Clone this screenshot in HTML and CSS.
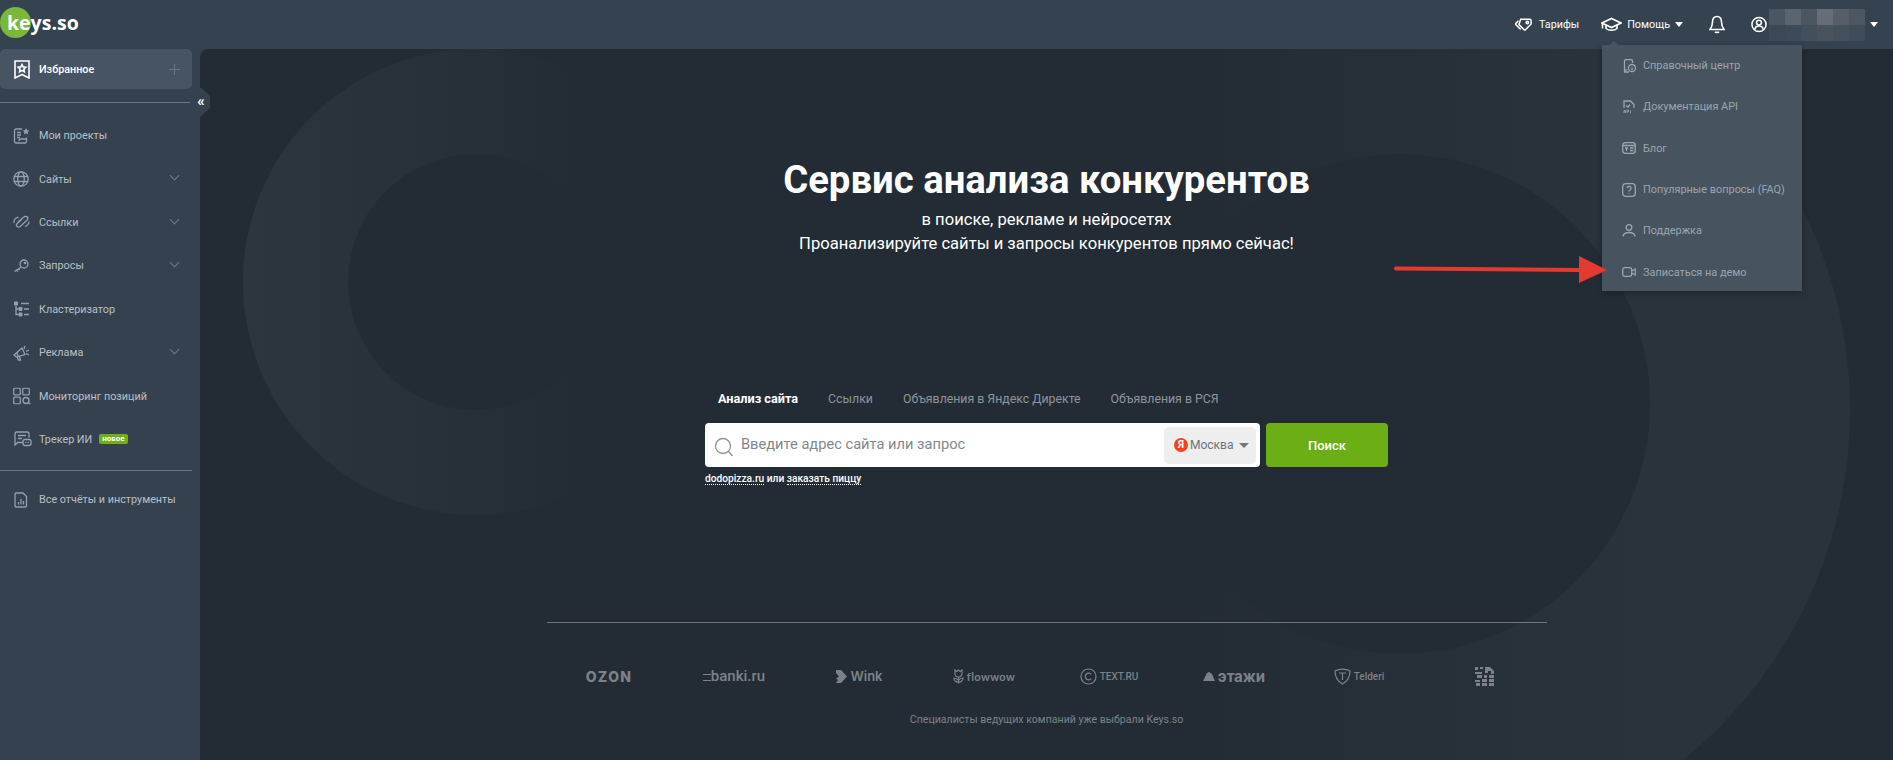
FILE: index.html
```html
<!DOCTYPE html>
<html lang="ru">
<head>
    <meta charset="UTF-8">
    <title>Keys.so</title>
    <link rel="stylesheet" href="styles.css">
</head>
<body>
<div class="app">
    <header class="topbar">
        <a class="logo"><span class="logo-dot"></span><span class="logo-text">keys.so</span></a>
        <nav class="topnav">
            <a class="topnav-item tariffs">
                <svg class="ico ico-bold" width="18" height="15" viewBox="0 0 19 15"><path d="M6 2h9.500a1.500 1.500 0 0 1 1.500 1.500V7l-6 6a1 1 0 0 1-1.400 0L4.500 7.900a1 1 0 0 1 0-1.400z"/><path d="M3.500 3.500L1 6.300a1 1 0 0 0 0 1.400l5 5"/><circle cx="13" cy="5.500" r="1.300"/></svg>
                Тарифы
            </a>
            <a class="topnav-item help">
                <svg class="ico ico-bold" width="21" height="15" viewBox="0 0 21 15"><path d="M10.500 1.500L20 6l-9.500 4.500L1 6z"/><path d="M5 8v3.500c2.500 2.300 8.500 2.300 11 0V8"/><path d="M1.500 6.500v5"/></svg>
                Помощь <span class="caret"></span>
            </a>
            <a class="topnav-item bell">
                <svg class="ico ico-bold" width="16" height="19" viewBox="0 0 16 19"><path d="M8 1.500c-3 0-4.500 2.300-4.500 5.500 0 3.500-1 5.500-2.500 7.500h14c-1.500-2-2.500-4-2.500-7.500 0-3.200-1.500-5.500-4.500-5.500z"/><path d="M6 16.800c.8 1 3.200 1 4 0"/></svg>
            </a>
            <a class="topnav-item account">
                <svg class="ico ico-bold" width="16" height="17" viewBox="0 0 17 17"><circle cx="8.500" cy="8.500" r="7.500"/><circle cx="8.500" cy="6.500" r="2.600"/><path d="M4 14c.3-2.800 2-4 4.500-4s4.200 1.200 4.500 4"/></svg>
                <span class="blur-name">
                    <i></i><i></i><i></i><i></i><i></i><i></i>
                    <i></i><i></i><i></i><i></i><i></i><i></i>
                </span>
                <span class="caret"></span>
            </a>
        </nav>
    </header>

    <aside class="sidebar">
        <a class="fav">
            <svg class="ico ico-bold" width="16" height="19" viewBox="0 0 16 19"><path d="M1 1h14v17l-7-3.500L1 18z"/><path d="M8 4.500l1.200 2.400 2.600.4-1.900 1.800.5 2.600L8 10.500l-2.400 1.200.5-2.600-1.900-1.800 2.600-.4z"/></svg>
            <span class="fav-label">Избранное</span>
            <span class="fav-plus"></span>
        </a>
        <hr class="side-line side-line-top">
        <ul class="side-menu">
            <li class="side-item">
                <svg class="ico" width="17" height="17" viewBox="0 0 17 17"><path d="M9 1.500H3a1.500 1.500 0 0 0-1.500 1.500v11A1.500 1.500 0 0 0 3 15.500h9a1.500 1.500 0 0 0 1.500-1.500V10"/><path d="M4 5h4M4 7.500h4M4 10h3M6 13.500c0-1.500 1-2 2-2h5"/><path class="solid" d="M13 .5l1 2.300 2.500.2-1.900 1.600.6 2.400-2.200-1.300-2.200 1.300.6-2.400L9.500 3l2.500-.2z"/></svg>
                <span>Мои проекты</span>
            </li>
            <li class="side-item">
                <svg class="ico" width="16" height="16" viewBox="0 0 16 16"><circle cx="8" cy="8" r="7.200"/><ellipse cx="8" cy="8" rx="3.300" ry="7.200"/><path d="M1.200 5.500h13.600M1.200 10.500h13.600"/></svg>
                <span>Сайты</span><span class="chevron"></span>
            </li>
            <li class="side-item">
                <svg class="ico" width="17" height="13" viewBox="0 0 17 13"><path d="M9 3.500L4 8.300c-1 1-.6 2.200.2 2.800.8.600 2 .8 3-.2l6.600-6.100c1.500-1.400 1.300-2.800.4-3.500-1-.7-2.400-.7-3.600.4L5 6.500"/><path d="M5.500 2H4.200C2 2.800.7 5 1 7.500M12 11c2-.6 3.800-2.600 4-5"/></svg>
                <span>Ссылки</span><span class="chevron"></span>
            </li>
            <li class="side-item">
                <svg class="ico" width="16" height="14" viewBox="0 0 16 14"><circle cx="11" cy="5" r="4"/><circle cx="12" cy="4" r=".7"/><path d="M8 8L1.500 12.500M3.500 11.200l1.500 1.300M5.500 9.800l1.300 1.200"/></svg>
                <span>Запросы</span><span class="chevron"></span>
            </li>
            <li class="side-item">
                <svg class="ico" width="17" height="17" viewBox="0 0 17 17"><rect class="solid" x="1" y="1" width="4" height="4" rx="1"/><rect class="solid" x="5.500" y="6.500" width="4" height="4" rx="1"/><rect class="solid" x="5.500" y="12" width="4" height="4" rx="1"/><path d="M3 5v9h2.500M3 8.500h2.500M8 3h8M11 8.500h5M11 14h5"/></svg>
                <span>Кластеризатор</span>
            </li>
            <li class="side-item">
                <svg class="ico" width="17" height="16" viewBox="0 0 17 16"><path d="M1 10l8-7 3 6.500-8.500 2.500z"/><path d="M4 12l1.500 3h2L6.500 11.300M3.500 7l2 5M12 1l-1 3M16 5l-3 1.500M16 10l-3-1.500"/></svg>
                <span>Реклама</span><span class="chevron"></span>
            </li>
            <li class="side-item">
                <svg class="ico" width="18" height="17" viewBox="0 0 18 17"><rect x=".7" y=".7" width="6.600" height="6.600" rx="1"/><rect x="9.700" y=".7" width="6.600" height="6.600" rx="1"/><rect x=".7" y="9.700" width="6.600" height="6.600" rx="1"/><circle cx="13" cy="13" r="3"/><path d="M15.200 15.200l2.300 1.600"/></svg>
                <span>Мониторинг позиций</span>
            </li>
            <li class="side-item">
                <svg class="ico" width="19" height="16" viewBox="0 0 19 16"><path d="M10 11.500H4.500L2 14V3a2 2 0 0 1 2-2h10a2 2 0 0 1 2 2v3.500"/><path d="M5 4.500h8M5 7.500h4"/><rect x="10" y="8.500" width="8" height="6" rx="2"/><path d="M12.800 11v1M15.200 11v1"/></svg>
                <span>Трекер ИИ</span><span class="new-badge">новое</span>
            </li>
        </ul>
        <hr class="side-line side-line-bottom">
        <div class="side-item">
            <svg class="ico" width="16" height="16" viewBox="0 0 16 16"><path d="M3 1h7l3.500 3.500V14a1 1 0 0 1-1 1H3a1 1 0 0 1-1-1V2a1 1 0 0 1 1-1z"/><path d="M5.500 12.500v-2.500M8 12.500V7M10.500 12.500V9"/></svg>
            <span>Все отчёты и инструменты</span>
        </div>
        <button class="collapse">«</button>
    </aside>

    <main class="main">
        <svg class="bg-rings" width="1693" height="711" viewBox="200 49 1693 711">
            <defs>
                <linearGradient id="ringLeft" gradientUnits="userSpaceOnUse" x1="243" y1="0" x2="590" y2="0">
                    <stop offset="0" stop-color="#2d353e"/>
                    <stop offset="1" stop-color="#232c35"/>
                </linearGradient>
                <linearGradient id="ringRight" gradientUnits="userSpaceOnUse" x1="1180" y1="0" x2="1640" y2="0">
                    <stop offset="0" stop-color="#232c35"/>
                    <stop offset="1" stop-color="#29333c"/>
                </linearGradient>
            </defs>
            <path fill="url(#ringLeft)" fill-rule="evenodd" d="M243 282a233 233 0 1 0 466 0a233 233 0 1 0-466 0zM348 282a128 128 0 1 0 256 0a128 128 0 1 0-256 0z"/>
            <path fill="url(#ringRight)" fill-rule="evenodd" d="M950 410a450 450 0 1 0 900 0a450 450 0 1 0-900 0zM1150 404a250 250 0 1 0 500 0a250 250 0 1 0-500 0z"/>
        </svg>

        <div class="hero">
            <h1>Сервис анализа конкурентов</h1>
            <p>в поиске, рекламе и нейросетях</p>
            <p>Проанализируйте сайты и запросы конкурентов прямо сейчас!</p>
        </div>

        <div class="search-block">
            <div class="tabs">
                <a class="tab active">Анализ сайта</a>
                <a class="tab">Ссылки</a>
                <a class="tab">Объявления в Яндекс Директе</a>
                <a class="tab">Объявления в РСЯ</a>
            </div>
            <div class="search-row">
                <div class="search-box">
                    <svg class="search-ico" width="20" height="20" viewBox="0 0 20 20"><circle cx="9" cy="9" r="7.500"/><path d="M14.500 14.500l4 4.500"/></svg>
                    <span class="placeholder">Введите адрес сайта или запрос</span>
                    <div class="region">
                        <span class="ya">Я</span>
                        <span>Москва</span>
                        <span class="caret caret-grey"></span>
                    </div>
                </div>
                <button class="search-btn">Поиск</button>
            </div>
            <div class="hints"><a>dodopizza.ru</a> или <a>заказать пиццу</a></div>
        </div>

        <div class="clients">
            <div class="client-row">
                <span class="client ozon">OZON</span>
                <span class="client banki"><i class="banki-lines"></i>banki.ru</span>
                <span class="client wink">
                    <svg width="12" height="13" viewBox="0 0 12 13"><path class="logo-fill" d="M1 0h5l6 6.500L6 13H1l2-3-2-1.500L4 6.500 1 3z"/></svg>
                    Wink
                </span>
                <span class="client flowwow">
                    <svg width="11" height="15" viewBox="0 0 11 15"><path class="logo-line" d="M2 1l1.800 1.500L5.500 1l1.700 1.500L9 1v3.500a3.500 3.500 0 0 1-7 0zM5.500 8v6.500M1 9c0 3 2 4 4.500 4.500C8 13 10 12 10 9c-2 0-3.500 1-4.500 2.500C4.500 10 3 9 1 9z"/></svg>
                    flowwow
                </span>
                <span class="client textru">
                    <svg width="17" height="17" viewBox="0 0 17 17"><circle class="logo-line" cx="8.500" cy="8.500" r="7.500"/><path class="logo-line" d="M11.300 6.300a3.400 3.400 0 1 0 0 4.400"/></svg>
                    TEXT.RU
                </span>
                <span class="client etazhi">
                    <svg width="12" height="9" viewBox="0 0 12 9"><path class="logo-fill" d="M0 9l4-8 2-1 3 2 3 7z"/></svg>
                    этажи
                </span>
                <span class="client telderi">
                    <svg width="17" height="17" viewBox="0 0 17 17"><path class="logo-line" d="M1 3c4-2.500 11-2.500 15 0 0 6-2 10-7.500 13C3 13 1 9 1 3z"/><path class="logo-line" d="M5 5h7M8.500 5v7"/></svg>
                    Telderi
                </span>
                <span class="client zoo">
                    <svg width="19" height="19" viewBox="0 0 19 19"><path class="logo-fill" d="M0 0h3v3H0zM5 0h3v2H5zM10 0h5l4 4v3h-3V4h-3v2h-3zM0 5h7v2H0zM2 8h5v3H2zM9 8h3v3H9zM14 8h5v3h-5zM0 13h5v2H0zM7 12h5v3H7zM14 12h5v3h-5zM1 16h4v3H1zM7 16h5v3H7zM14 16h5v3h-5z"/></svg>
                </span>
            </div>
            <p class="client-note">Специалисты ведущих компаний уже выбрали Keys.so</p>
        </div>
    </main>

    <div class="help-menu">
        <a class="help-item">
            <span class="help-ico"><svg class="ico" width="13" height="14" viewBox="0 0 13 14"><path d="M6 13H1.500V2A1.500 1.500 0 0 1 3 .5h5A1.500 1.500 0 0 1 9.500 2v2"/><path d="M1.500 11h3"/><circle cx="9" cy="9" r="3.500"/><path d="M9 8.500V11M9 7v.2"/></svg></span>
            Справочный центр
        </a>
        <a class="help-item">
            <span class="help-ico"><svg class="ico" width="12" height="14" viewBox="0 0 12 14"><path d="M1 8V1h6.500L11 4.500V8"/><path d="M3 5.500l2 1.500 2-2.500"/><path class="thin" d="M1 13V10.500h1.500V13M1 11.800h1.500M4 13V10h1.500v1.800H4M7.500 10v3"/></svg></span>
            Документация API
        </a>
        <a class="help-item">
            <span class="help-ico"><svg class="ico" width="14" height="12" viewBox="0 0 14 12"><rect x=".7" y=".7" width="12.600" height="10.600" rx="2.500"/><path d="M.7 3.500h12.600M3 6h3M4.500 6v3M8 6h3.500M8 8.500h3.500"/></svg></span>
            Блог
        </a>
        <a class="help-item">
            <span class="help-ico"><svg class="ico" width="14" height="14" viewBox="0 0 14 14"><rect x=".7" y=".7" width="12.600" height="12.600" rx="3"/><path d="M5 5.300a2 2 0 1 1 3 1.700c-.7.400-1 .8-1 1.500M7 10v.7"/></svg></span>
            Популярные вопросы (FAQ)
        </a>
        <a class="help-item">
            <span class="help-ico"><svg class="ico" width="14" height="13" viewBox="0 0 14 13"><circle cx="7" cy="3.500" r="2.800"/><path d="M1 12.500c.3-2.800 2.700-4 6-4s5.700 1.200 6 4"/></svg></span>
            Поддержка
        </a>
        <a class="help-item">
            <span class="help-ico"><svg class="ico" width="14" height="10" viewBox="0 0 14 10"><rect x=".7" y=".7" width="9" height="8.600" rx="2"/><path d="M9.700 4l3.600-2v6L9.700 6"/></svg></span>
            Записаться на демо
        </a>
    </div>

    <svg class="red-arrow" width="214" height="30" viewBox="0 0 214 30">
        <path d="M2 13.500L186 15" stroke="#e53a2f" stroke-width="4" stroke-linecap="round"/>
        <path d="M185 1l28 14-28 13z" fill="#e53a2f"/>
    </svg>
</div>
</body>
</html>
```

FILE: styles.css
```css
* {
    box-sizing: border-box;
}
html, body {
    margin: 0;
    height: 100%;
    overflow: hidden;
}
body {
    font-family: Roboto, "Liberation Sans", sans-serif;
    font-size: 10.8px;
    background-color: #35414f;
    color: #fff;
}
a {
    color: inherit;
    text-decoration: none;
}
.app {
    position: relative;
    display: grid;
    grid-template-columns: 200px 1fr;
    grid-template-rows: 49px 1fr;
    height: 100vh;
}
.ico {
    flex: none;
    fill: none;
    stroke: currentColor;
    stroke-width: 1.3;
}
.ico-bold {
    stroke-width: 1.6;
}
.ico .solid {
    fill: currentColor;
    stroke: none;
}
.ico .thin {
    stroke-width: 0.8;
}
.caret {
    display: inline-block;
    width: 0;
    height: 0;
    border-left: 4px solid transparent;
    border-right: 4px solid transparent;
    border-top: 5px solid #fff;
}

/* top bar */
.topbar {
    grid-column: 1 / 3;
    display: flex;
    justify-content: space-between;
    align-items: center;
    background-color: #35424f;
}
.logo {
    position: relative;
    display: block;
    width: 90px;
    height: 49px;
}
.logo-dot {
    position: absolute;
    left: 0;
    top: 7px;
    width: 31px;
    height: 31px;
    border-radius: 50%;
    background-color: #79b83b;
}
.logo-text {
    position: absolute;
    left: 7px;
    top: 8px;
    font-family: "Open Sans", Roboto, sans-serif;
    font-size: 19.5px;
    font-weight: 700;
    line-height: 30px;
}
.topnav {
    display: flex;
    align-items: center;
    height: 49px;
    padding-right: 15px;
}
.topnav-item {
    display: flex;
    align-items: center;
}
.tariffs {
    gap: 6px;
    margin-right: 22px;
}
.help {
    gap: 5px;
    margin-right: 26px;
}
.bell {
    margin-right: 26px;
}
.account {
    gap: 2px;
}
.blur-name {
    display: grid;
    grid-template-columns: repeat(6, 16px);
    grid-auto-rows: 16px;
    margin-right: 3px;
}
.blur-name i:nth-child(1) { background-color: #4a5661; }
.blur-name i:nth-child(2) { background-color: #5b6570; }
.blur-name i:nth-child(3) { background-color: #4a5763; }
.blur-name i:nth-child(4) { background-color: #676d77; }
.blur-name i:nth-child(5) { background-color: #565f69; }
.blur-name i:nth-child(6) { background-color: #4d5761; }
.blur-name i:nth-child(7) { background-color: #3b4855; }
.blur-name i:nth-child(8) { background-color: #3d4a57; }
.blur-name i:nth-child(9) { background-color: #43505c; }
.blur-name i:nth-child(10) { background-color: #48535e; }
.blur-name i:nth-child(11) { background-color: #45505c; }
.blur-name i:nth-child(12) { background-color: #3f4c59; }

/* sidebar */
.sidebar {
    position: relative;
    z-index: 1;
    color: #b9c0c8;
}
.fav {
    display: flex;
    align-items: center;
    width: 192px;
    height: 40px;
    padding: 0 12px 0 14px;
    border-radius: 5px;
    background-color: #465464;
    color: #fff;
}
.fav-label {
    margin-left: 9px;
    flex: 1;
    font-weight: 500;
}
.fav-plus {
    position: relative;
    width: 11px;
    height: 11px;
    background:
        linear-gradient(#6a7685, #6a7685) center / 100% 1px no-repeat,
        linear-gradient(#6a7685, #6a7685) center / 1px 100% no-repeat;
}
.side-line {
    height: 1px;
    margin: 0;
    border: none;
    background-color: #6d7681;
}
.side-line-top {
    width: 190px;
    margin-top: 13px;
}
.side-line-bottom {
    width: 192px;
    margin: 9px 0 7px;
}
.side-menu {
    list-style: none;
    margin: 11px 0 0;
    padding: 0;
}
.side-item {
    position: relative;
    display: flex;
    align-items: center;
    height: 43.4px;
    padding-left: 39px;
}
.side-item .ico {
    position: absolute;
    left: 13px;
    top: 50%;
    transform: translateY(-50%);
    color: #95a0ac;
}
.chevron {
    position: absolute;
    left: 171px;
    top: 15px;
    width: 7px;
    height: 7px;
    border-right: 1px solid #6f7c8a;
    border-bottom: 1px solid #6f7c8a;
    transform: rotate(45deg);
}
.new-badge {
    margin-left: 7px;
    padding: 0 3px;
    height: 10px;
    border-radius: 2px;
    background-color: #6fb016;
    color: #fff;
    font-size: 8px;
    font-weight: 700;
    line-height: 10px;
}
.collapse {
    position: absolute;
    left: 190px;
    top: 38px;
    width: 20px;
    height: 30px;
    padding: 0 0 2px 2px;
    border: none;
    clip-path: polygon(50% 0, 100% 30%, 100% 70%, 50% 100%, 0 100%, 0 0);
    background-color: #35414f;
    color: #fff;
    font-family: Roboto, sans-serif;
    font-size: 15px;
    font-weight: 700;
    line-height: 26px;
}

/* main area */
.main {
    position: relative;
    overflow: hidden;
    display: flex;
    flex-direction: column;
    align-items: center;
    border-top-left-radius: 8px;
    background-color: #232c35;
}
.bg-rings {
    position: absolute;
    left: 0;
    top: 0;
}
.hero,
.search-block,
.clients {
    position: relative;
}
.hero {
    padding-top: 110px;
    text-align: center;
}
.hero h1 {
    margin: 0 0 7px;
    font-size: 38.3px;
    font-weight: 700;
    line-height: 42px;
}
.hero p {
    margin: 0;
    font-size: 16.6px;
    line-height: 24px;
}
.search-block {
    width: 683px;
    margin-top: 133px;
}
.tabs {
    display: flex;
    height: 20px;
    margin-bottom: 14px;
    padding-left: 13px;
    font-size: 12.3px;
    line-height: 20px;
}
.tab {
    padding-right: 30px;
    color: #8f959c;
}
.tab.active {
    color: #fff;
    font-size: 12.7px;
    font-weight: 700;
}
.search-row {
    display: flex;
    gap: 6px;
    height: 44px;
}
.search-box {
    display: flex;
    align-items: center;
    width: 555px;
    padding: 0 4px 0 9px;
    border-radius: 4px;
    background-color: #fff;
}
.search-ico {
    flex: none;
    fill: none;
    stroke: #8f9498;
    stroke-width: 1.3;
    margin-top: 3px;
}
.placeholder {
    flex: 1;
    margin-left: 7px;
    padding-bottom: 2px;
    color: #83888d;
    font-size: 14.65px;
}
.region {
    display: flex;
    align-items: center;
    width: 92px;
    height: 37px;
    padding-left: 10px;
    border-radius: 5px;
    background-color: #eee;
    color: #6d7278;
    font-size: 12px;
}
.ya {
    width: 14px;
    height: 14px;
    margin-right: 2px;
    border-radius: 50%;
    background-color: #fc3f1d;
    color: #fff;
    font-size: 10px;
    font-weight: 700;
    line-height: 14px;
    text-align: center;
}
.caret-grey {
    margin-left: 6px;
    border-left-width: 5px;
    border-right-width: 5px;
    border-top: 5px solid #72777d;
}
.search-btn {
    width: 122px;
    border: none;
    border-radius: 4px;
    background-color: #6cae15;
    color: #fff;
    font-family: Roboto, sans-serif;
    font-size: 13px;
    font-weight: 500;
}
.hints {
    margin-top: 5px;
    font-size: 10.2px;
    font-weight: 500;
    line-height: 14px;
}
.hints a {
    border-bottom: 1px dotted #fff;
}
.clients {
    width: 1000px;
    margin-top: 136px;
    border-top: 1px solid #6f757b;
}
.client-row {
    display: grid;
    grid-template-columns: repeat(8, 125px);
    height: 20px;
    margin-top: 43px;
}
.client {
    display: flex;
    justify-content: center;
    align-items: center;
    gap: 3px;
    color: #7d8288;
    white-space: nowrap;
}
.logo-fill {
    fill: #7d8288;
}
.logo-line {
    fill: none;
    stroke: #7d8288;
    stroke-width: 1.2;
}
.ozon {
    font-family: Inter, sans-serif;
    font-size: 14px;
    font-weight: 800;
    letter-spacing: 1.300px;
}
.banki {
    gap: 0;
    font-size: 15px;
    font-weight: 500;
}
.banki-lines {
    width: 8px;
    height: 7px;
    margin-top: 2px;
    border-top: 1px solid #7d8288;
    border-bottom: 1px solid #7d8288;
}
.wink {
    font-family: Inter, sans-serif;
    font-size: 13px;
    font-weight: 600;
}
.flowwow {
    font-family: Lato, sans-serif;
    font-size: 11px;
    font-weight: 700;
    letter-spacing: 0.4px;
}
.textru {
    font-size: 10px;
    font-weight: 500;
}
.etazhi {
    font-family: Inter, sans-serif;
    font-size: 15px;
    font-weight: 700;
}
.telderi {
    font-size: 10px;
    font-weight: 500;
}
.client-note {
    margin: 26px 0 0;
    color: #7b8289;
    font-size: 10.6px;
    line-height: 16px;
    text-align: center;
}

/* dropdown over the page */
.help-menu {
    position: absolute;
    z-index: 2;
    left: 1602px;
    top: 45px;
    width: 200px;
    height: 246px;
    background-color: #47535f;
    box-shadow: 0 2px 6px rgba(0, 0, 0, 0.3);
    color: #9ca6b0;
    font-size: 10.9px;
}
.help-menu::before {
    content: "";
    position: absolute;
    left: 7px;
    top: -4px;
    border-left: 5px solid transparent;
    border-right: 5px solid transparent;
    border-bottom: 4px solid #47535f;
}
.help-item {
    display: flex;
    align-items: center;
    height: 41.3px;
    padding-left: 20px;
}
.help-ico {
    display: flex;
    justify-content: center;
    width: 14px;
    margin-right: 7px;
}
.red-arrow {
    position: absolute;
    z-index: 3;
    left: 1394px;
    top: 255px;
    fill: none;
}
```
